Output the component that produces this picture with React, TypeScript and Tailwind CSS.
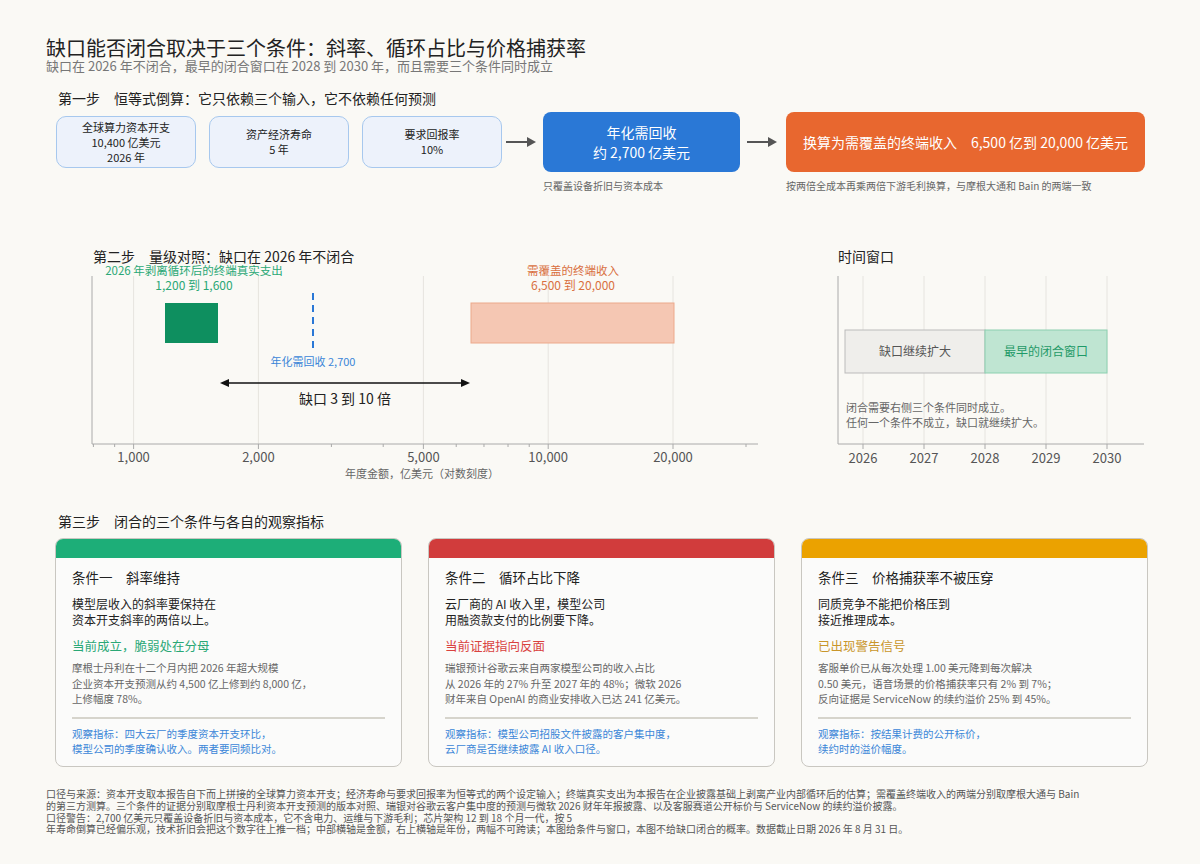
import React from "react";

const FONT = { fontFamily: '"Noto Sans CJK SC", "Noto Sans", sans-serif' };

const lx = (v: number) => 133.6 - 80 + 414.6 * Math.log10(v / 1000);

function Arrow() {
  return (
    <svg width="34" height="14" viewBox="0 0 34 14" className="shrink-0">
      <line x1="1" y1="7" x2="24" y2="7" stroke="#555" strokeWidth="2" />
      <path d="M22 2 L31 7 L22 12 Z" fill="#555" />
    </svg>
  );
}

function InputBox({ lines }: { lines: string[] }) {
  return (
    <div className="w-[140px] h-[52px] shrink-0 rounded-[10px] border border-[#a7c8ee] bg-[#edf2fb] flex flex-col items-center justify-center text-[11px] leading-[15px] text-[#222]">
      {lines.map((l) => (
        <div key={l}>{l}</div>
      ))}
    </div>
  );
}

function GapChart() {
  const major = [1000, 2000, 5000, 10000, 20000];
  const minor = [800, 900, 3000, 4000, 6000, 7000, 8000, 9000, 30000];
  return (
    <svg width="690" height="222" viewBox="0 -2 690 222" style={FONT}>
      {major.map((v) => (
        <line key={v} x1={lx(v)} y1="10" x2={lx(v)} y2="178" stroke="#e6e4df" />
      ))}
      <line x1="12" y1="10" x2="12" y2="178" stroke="#aaa" />
      <line x1="12" y1="178" x2="678" y2="178" stroke="#aaa" />
      {major.map((v) => (
        <g key={v}>
          <line x1={lx(v)} y1="178" x2={lx(v)} y2="183" stroke="#aaa" />
          <text x={lx(v)} y="196" textAnchor="middle" fontSize="13" fill="#555">
            {v.toLocaleString("en-US")}
          </text>
        </g>
      ))}
      {minor.map((v) => (
        <line key={v} x1={lx(v)} y1="178" x2={lx(v)} y2="181" stroke="#aaa" />
      ))}
      <text x="342" y="212" textAnchor="middle" fontSize="11" fill="#666">
        年度金额，亿美元（对数刻度）
      </text>

      <text x="114" y="9" textAnchor="middle" fontSize="11.5" fill="#2aa876">
        2026 年剥离循环后的终端真实支出
      </text>
      <text x="114" y="24" textAnchor="middle" fontSize="12" fill="#2aa876">
        1,200 到 1,600
      </text>
      <rect x="85" y="37" width="53" height="40" fill="#0e8f5f" />

      <text x="493" y="9" textAnchor="middle" fontSize="11.5" fill="#d9703f">
        需覆盖的终端收入
      </text>
      <text x="493" y="24" textAnchor="middle" fontSize="12" fill="#d9703f">
        6,500 到 20,000
      </text>
      <rect x="391" y="37" width="203" height="40" fill="#f5c7b3" stroke="#eca98b" />

      <line x1="233" y1="27" x2="233" y2="86" stroke="#2a78d6" strokeWidth="2" strokeDasharray="7 5" />
      <text x="233" y="100" textAnchor="middle" fontSize="11" fill="#3a86d8">
        年化需回收 2,700
      </text>

      <line x1="146" y1="117" x2="384" y2="117" stroke="#111" strokeWidth="1.6" />
      <path d="M140 117 L149 113 L149 121 Z" fill="#111" />
      <path d="M390 117 L381 113 L381 121 Z" fill="#111" />
      <text x="265" y="138" textAnchor="middle" fontSize="14" fill="#222">
        缺口 3 到 10 倍
      </text>
    </svg>
  );
}

function TimeChart() {
  const years = [2026, 2027, 2028, 2029, 2030];
  const yx = (y: number) => 33 + (y - 2026) * 61;
  return (
    <svg width="330" height="212" viewBox="0 -2 330 212" style={FONT}>
      {years.map((y) => (
        <line key={y} x1={yx(y)} y1="10" x2={yx(y)} y2="178" stroke="#e6e4df" />
      ))}
      <line x1="8" y1="10" x2="8" y2="178" stroke="#aaa" />
      <line x1="8" y1="178" x2="314" y2="178" stroke="#aaa" />
      {years.map((y) => (
        <g key={y}>
          <line x1={yx(y)} y1="178" x2={yx(y)} y2="183" stroke="#aaa" />
          <text x={yx(y)} y="197" textAnchor="middle" fontSize="13" fill="#555">
            {y}
          </text>
        </g>
      ))}
      <rect x="15" y="64" width="140" height="43" fill="#efeeeb" stroke="#bbb" />
      <text x="85" y="90" textAnchor="middle" fontSize="12" fill="#555">
        缺口继续扩大
      </text>
      <rect x="155" y="64" width="122" height="43" fill="#bfe5d2" stroke="#8bd0b0" />
      <text x="216" y="90" textAnchor="middle" fontSize="12" fill="#1f9a68">
        最早的闭合窗口
      </text>
      <text x="16" y="146" fontSize="11" fill="#666">
        闭合需要右侧三个条件同时成立。
      </text>
      <text x="16" y="161" fontSize="11" fill="#666">
        任何一个条件不成立，缺口就继续扩大。
      </text>
    </svg>
  );
}

type Card = {
  bar: string;
  title: string;
  body: string[];
  statusColor: string;
  status: string;
  detail: string[];
  watch: string[];
};

const cards: Card[] = [
  {
    bar: "bg-[#1dae78]",
    title: "条件一　斜率维持",
    body: ["模型层收入的斜率要保持在", "资本开支斜率的两倍以上。"],
    statusColor: "text-[#2aa876]",
    status: "当前成立，脆弱处在分母",
    detail: [
      "摩根士丹利在十二个月内把 2026 年超大规模",
      "企业资本开支预测从约 4,500 亿上修到约 8,000 亿，",
      "上修幅度 78%。",
    ],
    watch: ["观察指标：四大云厂的季度资本开支环比，", "模型公司的季度确认收入。两者要同频比对。"],
  },
  {
    bar: "bg-[#d13c3c]",
    title: "条件二　循环占比下降",
    body: ["云厂商的 AI 收入里，模型公司", "用融资款支付的比例要下降。"],
    statusColor: "text-[#d9423f]",
    status: "当前证据指向反面",
    detail: [
      "瑞银预计谷歌云来自两家模型公司的收入占比",
      "从 2026 年的 27% 升至 2027 年的 48%；微软 2026",
      "财年来自 OpenAI 的商业安排收入已达 241 亿美元。",
    ],
    watch: ["观察指标：模型公司招股文件披露的客户集中度，", "云厂商是否继续披露 AI 收入口径。"],
  },
  {
    bar: "bg-[#eba200]",
    title: "条件三　价格捕获率不被压穿",
    body: ["同质竞争不能把价格压到", "接近推理成本。"],
    statusColor: "text-[#c9962a]",
    status: "已出现警告信号",
    detail: [
      "客服单价已从每次处理 1.00 美元降到每次解决",
      "0.50 美元，语音场景的价格捕获率只有 2% 到 7%；",
      "反向证据是 ServiceNow 的续约溢价 25% 到 45%。",
    ],
    watch: ["观察指标：按结果计费的公开标价，", "续约时的溢价幅度。"],
  },
];

function ConditionCard({ c }: { c: Card }) {
  return (
    <div className="w-[347px] h-[229px] rounded-[8px] border border-[#c9c7c1] bg-[#fbfbfa] overflow-hidden flex flex-col">
      <div className={`h-[19px] ${c.bar}`} />
      <div className="px-[16px] pt-[9px] flex flex-col">
        <div className="text-[13.5px] leading-[20px] text-[#222]">{c.title}</div>
        <div className="mt-[9px] text-[12px] leading-[16px] text-[#222]">
          {c.body.map((l) => (
            <div key={l}>{l}</div>
          ))}
        </div>
        <div className={`mt-[9px] text-[12.5px] leading-[18px] ${c.statusColor}`}>{c.status}</div>
        <div className="mt-[5px] text-[10.5px] leading-[15.5px] text-[#666]">
          {c.detail.map((l) => (
            <div key={l}>{l}</div>
          ))}
        </div>
        <div className="mt-[10px] h-[2px] bg-[#d6d4cc]" />
        <div className="mt-[7px] text-[10.5px] leading-[15.5px] text-[#3a86d8]">
          {c.watch.map((l) => (
            <div key={l}>{l}</div>
          ))}
        </div>
      </div>
    </div>
  );
}

export default function App() {
  return (
    <div className="w-[1200px] h-[864px] bg-[#faf9f5] pl-[46px] pt-[36px] overflow-hidden" style={FONT}>
      {/* ===== title ===== */}
      <div className="text-[20px] leading-[24px] text-[#222]">缺口能否闭合取决于三个条件：斜率、循环占比与价格捕获率</div>
      <div className="text-[13px] leading-[12px] text-[#777]">
        缺口在 2026 年不闭合，最早的闭合窗口在 2028 到 2030 年，而且需要三个条件同时成立
      </div>

      {/* ===== step 1 ===== */}
      <div className="mt-[17px] ml-[12px] text-[14px] leading-[18px] text-[#222]">
        第一步　恒等式倒算：它只依赖三个输入，它不依赖任何预测
      </div>
      <div className="mt-[5px] ml-[10px] flex items-start">
        <div className="flex items-center gap-[13px] h-[60px]">
          <InputBox lines={["全球算力资本开支", "10,400 亿美元", "2026 年"]} />
          <InputBox lines={["资产经济寿命", "5 年"]} />
          <InputBox lines={["要求回报率", "10%"]} />
        </div>
        <div className="h-[60px] flex items-center ml-[3px] mr-[4px]">
          <Arrow />
        </div>
        <div className="flex flex-col">
          <div className="w-[197px] h-[60px] rounded-[8px] bg-[#2a78d6] text-white text-[14px] leading-[20px] flex flex-col items-center justify-center">
            <div>年化需回收</div>
            <div>约 2,700 亿美元</div>
          </div>
          <div className="mt-[6px] text-[10px] text-[#666]">只覆盖设备折旧与资本成本</div>
        </div>
        <div className="h-[60px] flex items-center ml-[6px] mr-[6px]">
          <Arrow />
        </div>
        <div className="flex flex-col">
          <div className="w-[359px] h-[60px] rounded-[8px] bg-[#e8672f] text-white text-[14px] flex items-center justify-center">
            换算为需覆盖的终端收入　6,500 亿到 20,000 亿美元
          </div>
          <div className="mt-[6px] text-[10px] text-[#666]">
            按两倍全成本再乘两倍下游毛利换算，与摩根大通和 Bain 的两端一致
          </div>
        </div>
      </div>

      {/* ===== step 2 ===== */}
      <div className="mt-[55px] flex">
        <div className="ml-[34px] flex flex-col">
          <div className="ml-[13px] text-[14px] leading-[16px] text-[#222]">第二步　量级对照：缺口在 2026 年不闭合</div>
          <GapChart />
        </div>
        <div className="ml-[60px] flex flex-col">
          <div className="ml-[8px] text-[14px] leading-[16px] text-[#222]">时间窗口</div>
          <TimeChart />
        </div>
      </div>

      {/* ===== step 3 ===== */}
      <div className="mt-[26px] ml-[12px] text-[14px] leading-[18px] text-[#222]">第三步　闭合的三个条件与各自的观察指标</div>
      <div className="mt-[8px] ml-[9px] flex gap-[26px]">
        {cards.map((c) => (
          <ConditionCard key={c.title} c={c} />
        ))}
      </div>

      {/* ===== footer ===== */}
      <div className="mt-[21px] text-[10px] leading-[11.8px] text-[#555]">
        <div>
          口径与来源：资本开支取本报告自下而上拼接的全球算力资本开支；经济寿命与要求回报率为恒等式的两个设定输入；终端真实支出为本报告在企业披露基础上剥离产业内部循环后的估算；需覆盖终端收入的两端分别取摩根大通与 Bain
        </div>
        <div>
          的第三方测算。三个条件的证据分别取摩根士丹利资本开支预测的版本对照、瑞银对谷歌云客户集中度的预测与微软 2026 财年年报披露、以及客服赛道公开标价与 ServiceNow 的续约溢价披露。
        </div>
        <div>口径警告：2,700 亿美元只覆盖设备折旧与资本成本，它不含电力、运维与下游毛利；芯片架构 12 到 18 个月一代，按 5</div>
        <div>
          年寿命倒算已经偏乐观，技术折旧会把这个数字往上推一档；中部横轴是金额，右上横轴是年份，两幅不可跨读；本图给条件与窗口，本图不给缺口闭合的概率。数据截止日期 2026 年 8 月 31 日。
        </div>
      </div>
    </div>
  );
}
